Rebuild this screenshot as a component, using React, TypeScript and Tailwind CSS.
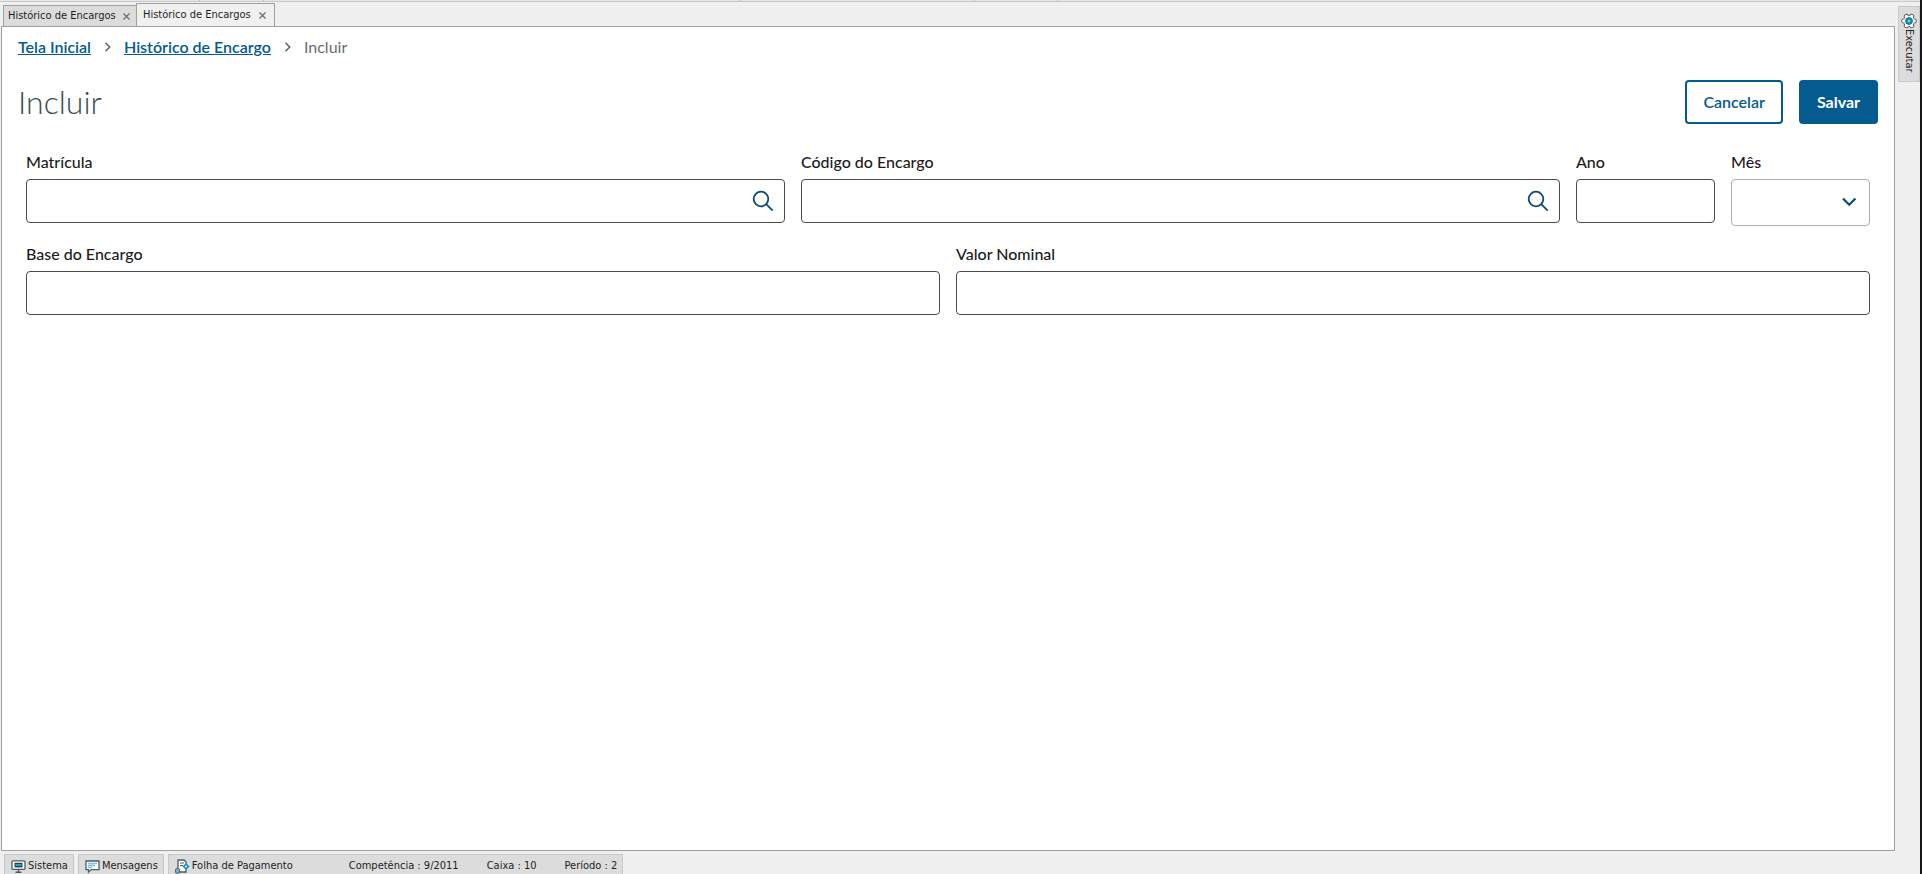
import { useState } from "react";
import type { ReactNode } from "react";

interface TabProps {
  label: string;
  active?: boolean;
}

function WindowTab({ label, active }: TabProps) {
  return (
    <div
      className={`flex items-center justify-between border border-b-0 border-[#a0a0a0] text-[#1e1e1e] ${
        active ? "-mb-px -ml-px h-6 w-[139px] bg-[#f0f0f0] pr-1.5 pl-1.5" : "h-[21px] w-[134px] bg-[#dcdcdc] pr-1 pl-1"
      }`}
    >
      <button type="button" className="whitespace-nowrap">
        {label}
      </button>
      <button type="button" aria-label={`Fechar ${label}`} className="flex size-3 items-center justify-center">
        <svg width="7" height="7" viewBox="0 0 7 7" stroke="#6e6e6e" strokeWidth="1.3">
          <path d="M0.5 0.5l6 6M6.5 0.5l-6 6" />
        </svg>
      </button>
    </div>
  );
}

function Separator() {
  return (
    <svg className="mx-3" width="9" height="10" viewBox="0 0 9 10" fill="none" stroke="#5c5c5c" strokeWidth="1.4" aria-hidden="true">
      <path d="M2.5 0.8l4.2 4.2-4.2 4.2" />
    </svg>
  );
}

interface FieldProps {
  id: string;
  label: string;
  className: string;
  lookup?: boolean;
}

function Field({ id, label, className, lookup }: FieldProps) {
  const [value, setValue] = useState("");
  return (
    <div className={`px-2 ${className}`}>
      <label htmlFor={id} className="mb-1.5 block leading-[22px] font-medium text-[#1c1c1c]">
        {label}
      </label>
      <div className="flex h-11 items-center rounded border border-[#4a4a4a] bg-white">
        <input
          id={id}
          value={value}
          onChange={(e) => setValue(e.target.value)}
          className="h-full w-full min-w-0 rounded bg-transparent px-3 outline-none"
        />
        {lookup && (
          <button type="button" aria-label={`Pesquisar ${label}`} className="mr-2.5 shrink-0">
            <svg width="22" height="22" viewBox="0 0 22 22" fill="none" stroke="#0a4a73" strokeWidth="1.8">
              <circle cx="9" cy="9" r="7.3" />
              <path d="M14.2 14.2l6.5 6.5" />
            </svg>
          </button>
        )}
      </div>
    </div>
  );
}

function MonthSelect() {
  return (
    <div className="col-span-1 px-2">
      <label htmlFor="mes" className="mb-1.5 block leading-[22px] font-medium text-[#1c1c1c]">
        Mês
      </label>
      <div className="relative">
        <select id="mes" defaultValue="" className="block h-[47px] w-full appearance-none rounded border border-[#b0b0b0] bg-white px-3">
          <option value=""></option>
          {Array.from({ length: 12 }, (_, i) => (
            <option key={i} value={i + 1}>
              {i + 1}
            </option>
          ))}
        </select>
        <svg
          className="pointer-events-none absolute top-4 right-3"
          width="16"
          height="14"
          viewBox="0 0 16 14"
          fill="none"
          stroke="#0a4a73"
          strokeWidth="2.2"
        >
          <path d="M1 3.5l6.2 6.2 6.2-6.2" />
        </svg>
      </div>
    </div>
  );
}

function StatusItem({ icon, children }: { icon: ReactNode; children: ReactNode }) {
  return (
    <div className="flex items-center gap-0.5 border border-b-0 border-[#c8c8c8] bg-[#dcdcdc] pt-1 pr-[5px] pl-1.5 whitespace-nowrap">
      {icon}
      {children}
    </div>
  );
}

const monitorIcon = (
  <svg width="15" height="14" viewBox="0 0 15 14" fill="none">
    <rect x="1" y="0.8" width="13" height="8.6" rx="1" fill="#fff" stroke="#4c5a62" strokeWidth="1.3" />
    <rect x="3.5" y="2.8" width="8" height="4.6" fill="#24404d" />
    <path d="M4.5 5h6" stroke="#36b4dc" strokeWidth="1.6" />
    <path d="M7.5 9.5v2.5M4.5 12.3h6" stroke="#4c5a62" strokeWidth="1.4" />
  </svg>
);

const messageIcon = (
  <svg width="15" height="14" viewBox="0 0 15 14" fill="none">
    <path d="M1 1h13v8.6H6.5l-3 2.6v-2.6H1z" fill="#fff" stroke="#4c5a62" strokeWidth="1.3" />
    <path d="M3 3.5h9M3 5.5h7M3 7.5h4" stroke="#7cc3dc" strokeWidth="1.6" />
  </svg>
);

const payrollIcon = (
  <svg width="15" height="15" viewBox="0 0 15 15" fill="none">
    <path d="M3 9V1h6l2 2v10H5" fill="#fff" stroke="#4c5a62" strokeWidth="1.3" />
    <path d="M5 4h4M5 6.5h3" stroke="#4c5a62" />
    <path d="M11 4l3.5 3.5L11 11 7.5 7.5z" fill="#1592bd" />
    <circle cx="11" cy="7.5" r="1" fill="#fff" />
    <rect x="0.6" y="9.6" width="4" height="4.6" rx="1" fill="#73b8d0" stroke="#4c5a62" />
  </svg>
);

function GearIcon() {
  return (
    <svg className="shrink-0" width="16" height="16" viewBox="0 0 16 16" fill="#fff" stroke="#4c5a62">
      {[0, 60, 120, 180, 240, 300].map((a) => (
        <circle key={a} cx="8" cy="2.7" r="2.1" transform={`rotate(${a + 30} 8 8)`} />
      ))}
      <circle cx="8" cy="8" r="5" stroke="none" />
      <circle cx="8" cy="8" r="3.4" fill="#1592bd" stroke="#176f8f" />
      <circle cx="8" cy="8" r="1" fill="#bfe9f7" stroke="none" />
    </svg>
  );
}

// Lower edge of the toolbar groups that sit above the tab strip
function ToolbarEdge() {
  return (
    <div className="flex h-0.5 shrink-0 border-b border-[#c8c8c8] bg-[#e6e6e6]">
      <div className="w-[200px] border-r border-[#bdbdbd]" />
      <div className="w-16 border-r border-[#bdbdbd]" />
      <div className="w-[476px] border-r border-[#bdbdbd]" />
      <div className="w-[235px] border-r border-[#bdbdbd]" />
      <div className="w-[83px] border-r border-[#bdbdbd]" />
    </div>
  );
}

export default function App() {
  return (
    <div className="flex h-screen overflow-hidden bg-[#f0f0f0] font-['DejaVu_Sans_Condensed','DejaVu_Sans',sans-serif] text-[11px]">
      <div className="flex min-w-0 flex-1 flex-col">
        <ToolbarEdge />
        <div className="flex min-h-0 flex-1">
          <div className="flex min-w-0 flex-1 flex-col pl-px">
            <nav aria-label="Janelas" className="flex h-6 shrink-0 items-end pl-0.5">
              <WindowTab label="Histórico de Encargos" />
              <WindowTab label="Histórico de Encargos" active />
            </nav>

            <main className="flex-1 border border-[#a0a0a0] bg-white px-4 pt-2 font-[Lato,sans-serif] text-base">
              <nav aria-label="Trilha" className="flex h-6 items-center">
                <a href="#inicio" className="font-semibold text-[#045b8f] underline">
                  Tela Inicial
                </a>
                <Separator />
                <a href="#historico" className="font-semibold text-[#045b8f] underline">
                  Histórico de Encargo
                </a>
                <Separator />
                <span className="text-[#6b6b6b]">Incluir</span>
              </nav>

              <form onSubmit={(e) => e.preventDefault()}>
                <header className="mt-[21px] flex items-center justify-between">
                  <h1 className="text-[32px] leading-10 font-light text-[#3c4e52]">Incluir</h1>
                  <div className="flex gap-4">
                    <button type="button" className="h-11 rounded border-2 border-[#045b8f] bg-white px-4 font-semibold text-[#045b8f]">
                      Cancelar
                    </button>
                    <button type="submit" className="h-11 rounded bg-[#045b8f] px-[18px] font-bold text-white">
                      Salvar
                    </button>
                  </div>
                </header>

                <div className="mt-[27px] grid grid-cols-12 items-start gap-y-[17px]">
                  <Field id="matricula" label="Matrícula" className="col-span-5" lookup />
                  <Field id="codigo" label="Código do Encargo" className="col-span-5" lookup />
                  <Field id="ano" label="Ano" className="col-span-1" />
                  <MonthSelect />
                  <Field id="base" label="Base do Encargo" className="col-span-6" />
                  <Field id="valor" label="Valor Nominal" className="col-span-6" />
                </div>
              </form>
            </main>
          </div>

          <aside className="w-[25px] shrink-0 pt-1 pl-[3px]">
            <button
              type="button"
              className="flex h-[76px] w-full flex-col items-center border border-[#c8c8c8] bg-[#dcdcdc] pt-1.5 text-[#1e1e1e]"
            >
              <GearIcon />
              <span className="[writing-mode:vertical-rl]">Executar</span>
            </button>
          </aside>
        </div>

        <footer className="flex h-[23px] shrink-0 gap-1 pt-[3px] pl-1 text-[#1e1e1e]">
          <StatusItem icon={monitorIcon}>Sistema</StatusItem>
          <StatusItem icon={messageIcon}>Mensagens</StatusItem>
          <StatusItem icon={payrollIcon}>
            <span className="mr-[54px]">Folha de Pagamento</span>
            <span className="mr-[26px]">Competência : 9/2011</span>
            <span className="mr-[26px]">Caixa : 10</span>
            <span>Período : 2</span>
          </StatusItem>
        </footer>
      </div>
      <div className="w-0.5 shrink-0 bg-[#15161c]" />
    </div>
  );
}
